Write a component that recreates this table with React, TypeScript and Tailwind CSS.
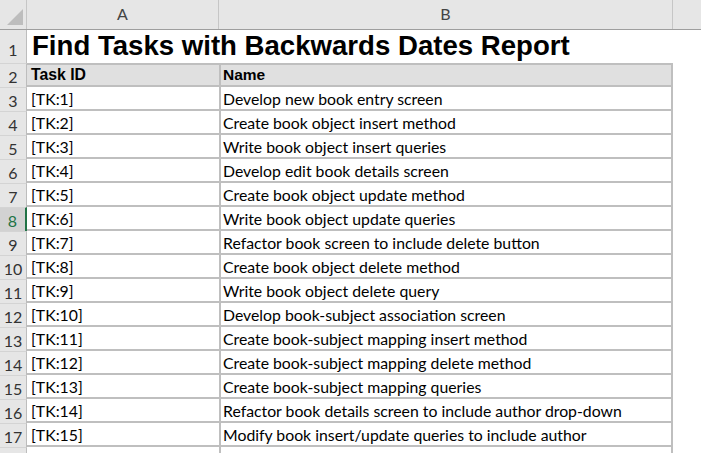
import React from 'react'

const rows = [
  ['[TK:1]', 'Develop new book entry screen'],
  ['[TK:2]', 'Create book object insert method'],
  ['[TK:3]', 'Write book object insert queries'],
  ['[TK:4]', 'Develop edit book details screen'],
  ['[TK:5]', 'Create book object update method'],
  ['[TK:6]', 'Write book object update queries'],
  ['[TK:7]', 'Refactor book screen to include delete button'],
  ['[TK:8]', 'Create book object delete method'],
  ['[TK:9]', 'Write book object delete query'],
  ['[TK:10]', 'Develop book-subject association screen'],
  ['[TK:11]', 'Create book-subject mapping insert method'],
  ['[TK:12]', 'Create book-subject mapping delete method'],
  ['[TK:13]', 'Create book-subject mapping queries'],
  ['[TK:14]', 'Refactor book details screen to include author drop-down'],
  ['[TK:15]', 'Modify book insert/update queries to include author'],
  ['', ''],
]

const cellFont = { fontFamily: 'Lato, "Liberation Sans", sans-serif' }
const arial = { fontFamily: '"Liberation Sans", Arial, sans-serif' }

const App = () => {
  return (
    <div className="w-[701px] h-[453px] overflow-hidden bg-white" style={cellFont}>
      {/* column headers */}
      <div className="flex h-[30px] bg-[#e6e6e6] border-b border-[#9e9e9e]">
        <div className="w-[27px] shrink-0 border-r border-[#c6c6c6] relative">
          <svg className="absolute left-[7px] top-[9px]" width="16" height="16" viewBox="0 0 16 16">
            <polygon points="16,0 16,16 0,16" fill="#bdbdbd" />
          </svg>
        </div>
        <div className="w-[192px] shrink-0 border-r border-[#c6c6c6] flex items-end justify-center pb-[3px] text-[16px] text-[#444]">A</div>
        <div className="w-[454px] shrink-0 border-r border-[#c6c6c6] flex items-end justify-center pb-[3px] text-[16px] text-[#444]">B</div>
        <div className="flex-1" />
      </div>

      {/* row 1: title */}
      <div className="flex h-[33px]">
        <div className="w-[27px] shrink-0 bg-[#e6e6e6] border-r border-[#bdbdbd] flex items-end justify-center pb-[1px] text-[16px] text-[#333]">1</div>
        <div className="flex-1 pl-[5px] flex items-end pb-[3px] text-[27.6px] font-bold leading-none text-black" style={arial}>
          Find Tasks with Backwards Dates Report
        </div>
      </div>

      {/* row 2: table head */}
      <div className="flex h-[24px]">
        <div className="w-[27px] shrink-0 bg-[#e6e6e6] border-r border-[#bdbdbd] border-t border-t-[#d4d4d4] flex items-center justify-center pt-[2px] text-[16px] text-[#333]">2</div>
        <div className="w-[192px] shrink-0 bg-[#e0e0e0] border-y-2 border-[#bfbfbf] pl-[4px] flex items-center text-[15.8px] font-bold text-black" style={arial}>Task ID</div>
        <div className="w-[454px] shrink-0 bg-[#e0e0e0] border-2 border-[#bfbfbf] pl-[2px] flex items-center text-[15.5px] font-bold text-black" style={arial}>Name</div>
      </div>

      {rows.map((r, i) => {
        const n = i + 3
        const active = n === 8
        return (
          <div key={n} className="flex h-[24px]">
            <div
              className={
                active
                  ? 'w-[27px] shrink-0 bg-[#d2d2d2] border-r-2 border-[#217346] border-t border-t-[#d4d4d4] flex items-center justify-center pt-[2px] text-[16px] text-[#217346]'
                  : 'w-[27px] shrink-0 bg-[#e6e6e6] border-r border-[#bdbdbd] border-t border-t-[#d4d4d4] flex items-center justify-center pt-[2px] text-[16px] text-[#333]'
              }
            >
              {r[0] ? n : ''}
            </div>
            <div className="w-[192px] shrink-0 border-b-2 border-[#bfbfbf] pl-[4px] pt-[1px] flex items-center text-[15.8px] text-black whitespace-nowrap">{r[0]}</div>
            <div className="w-[454px] shrink-0 border-x-2 border-b-2 border-[#bfbfbf] pl-[2px] pt-[1px] flex items-center text-[15.8px] text-black whitespace-nowrap">{r[1]}</div>
          </div>
        )
      })}
    </div>
  )
}

export default App
